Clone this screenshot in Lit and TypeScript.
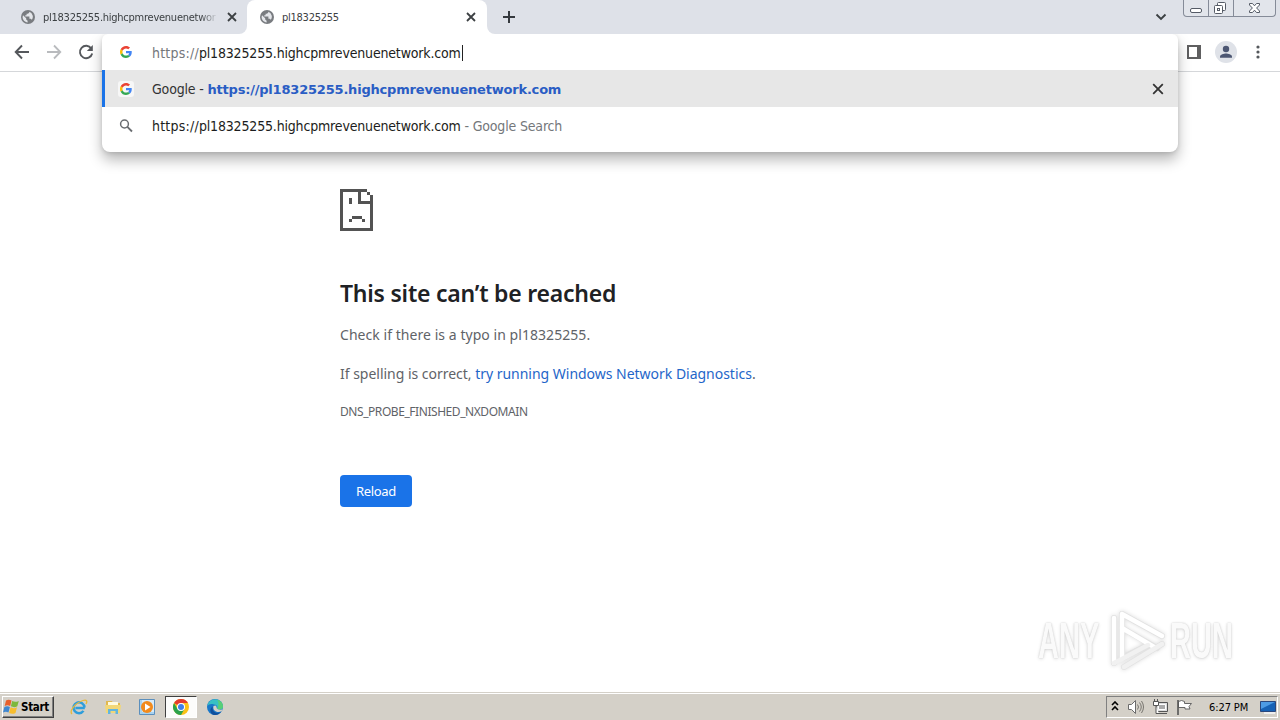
import { LitElement, html, css, svg } from 'lit';
import { customElement } from 'lit/decorators.js';

const globe = html`
  <svg class="globe" width="14" height="14" viewBox="0 0 14 14">
    <circle cx="7" cy="7" r="7" fill="#797c80" />
    <path d="M2 5.2 5.2 8.3v1.3l1.4 1.1v1.7C3.700 12.100 1.600 9.800 1.600 7zM8.300 1.800v.7L7 3.800H5.600v1.500H4.300v1.300h4.100v2.100h1.300l1.200 1.100a5.300 5.300 0 0 0-2.600-8z" fill="#e4e6ea" />
  </svg>`;

const googleG = html`
  <svg width="12" height="12" viewBox="0 0 48 48">
    <path fill="#ea4335" d="M24 9.500c3.540 0 6.710 1.220 9.210 3.600l6.850-6.850C35.900 2.380 30.470 0 24 0 14.620 0 6.510 5.380 2.560 13.220l7.980 6.190C12.430 13.720 17.740 9.500 24 9.500z" />
    <path fill="#4285f4" d="M46.980 24.550c0-1.570-.15-3.090-.38-4.550H24v9.020h12.940c-.58 2.960-2.260 5.480-4.780 7.180l7.730 6c4.510-4.180 7.090-10.360 7.090-17.650z" />
    <path fill="#fbbc05" d="M10.530 28.590c-.48-1.450-.76-2.990-.76-4.590s.27-3.140.76-4.590l-7.980-6.190C.92 16.460 0 20.120 0 24s.92 7.540 2.560 10.780l7.970-6.190z" />
    <path fill="#34a853" d="M24 48c6.480 0 11.930-2.130 15.890-5.810l-7.730-6c-2.150 1.450-4.920 2.300-8.160 2.300-6.260 0-11.570-4.220-13.470-9.910l-7.980 6.190C6.510 42.620 14.620 48 24 48z" />
  </svg>`;

const cross = (size: number, width: number) => html`
  <svg width=${size} height=${size} viewBox="0 0 10 10">
    <path d="M1 1 9 9M9 1 1 9" stroke="currentColor" stroke-width=${width} fill="none" />
  </svg>`;

@customElement('tab-strip')
export class TabStrip extends LitElement {
  static styles = css`
    :host {
      display: flex;
      height: 34px;
      background: #fff;
      color: #3c4043;
      font: 11px 'DejaVu Sans Condensed', 'DejaVu Sans', sans-serif;
    }
    .tab {
      display: flex;
      align-items: center;
      box-sizing: border-box;
      height: 34px;
    }
    .idle {
      width: 247px;
      padding-left: 21px;
      background: #dee1e8;
      border-bottom-right-radius: 8px;
    }
    .corner {
      width: 240px;
      background: linear-gradient(#dee1e8 0 12px, #fff 12px);
    }
    .active {
      width: 240px;
      padding-left: 13px;
      background: #fff;
      border-radius: 8px 8px 0 0;
    }
    .label {
      width: 175px;
      margin-left: 8px;
      padding-top: 1px;
      overflow: hidden;
      white-space: nowrap;
      letter-spacing: -0.25px;
      line-height: 16px;
    }
    .fade {
      -webkit-mask-image: linear-gradient(90deg, #000 90%, transparent);
    }
    .active .label {
      width: 180px;
    }
    .tab > svg:last-child {
      margin-left: 9px;
    }
    .active > svg:last-child {
      margin-left: 4px;
    }
    .rest {
      flex: 1;
      display: flex;
      align-items: center;
      justify-content: space-between;
      background: #dee1e8;
      border-bottom-left-radius: 8px;
      padding-left: 16px;
    }
    .right {
      display: flex;
      align-items: center;
      height: 34px;
    }
    .caption {
      display: flex;
      align-self: flex-start;
      box-sizing: border-box;
      width: 93px;
      height: 17px;
      margin: 0 4px 0 16px;
      border: 1px solid #858b98;
      border-top: 0;
      border-radius: 0 0 4px 4px;
      background: #e2e5eb;
    }
    .caption svg {
      display: block;
    }
    .caption svg + svg {
      border-left: 1px solid #858b98;
    }
  `;

  render() {
    return html`
      <div class="tab idle">
        ${globe}
        <span class="label fade">pl18325255.highcpmrevenuenetwor</span>
        ${cross(10, 1.8)}
      </div>
      <div class="corner">
        <div class="tab active">
          ${globe}
          <span class="label">pl18325255</span>
          ${cross(10, 1.8)}
        </div>
      </div>
      <div class="rest">
        <svg width="12" height="12" viewBox="0 0 12 12">
          <path d="M6 0v12M0 6h12" stroke="#35393e" stroke-width="2" />
        </svg>
        <div class="right">
          <svg width="12" height="8" viewBox="0 0 12 8">
            <path d="m1.500 1.500 4.500 4.500 4.500-4.500" fill="none" stroke="#3c4043" stroke-width="1.900" />
          </svg>
          <div class="caption">
            <svg width="24" height="16" viewBox="0 0 24 16">
              <rect x="6.500" y="8.500" width="11" height="4" rx="1.500" fill="#fff" stroke="#555b66" />
            </svg>
            <svg width="24" height="16" viewBox="0 0 24 16">
              <g fill="#fff" stroke="#555b66">
                <rect x="8.500" y="2.500" width="8" height="8" rx="1" />
                <rect x="5.500" y="5.500" width="8" height="8" rx="1" />
                <rect x="8.500" y="8.500" width="2" height="2" />
              </g>
            </svg>
            <svg width="41" height="16" viewBox="0 0 41 16">
              <path d="M15.500 3.500h3l2 2.300 2-2.300h3v1.500L22.600 8l2.900 3v1.500h-3l-2-2.300-2 2.300h-3V11l2.900-3-2.900-3z" fill="#fff" stroke="#555b66" />
            </svg>
          </div>
        </div>
      </div>
    `;
  }
}

@customElement('tool-bar')
export class ToolBar extends LitElement {
  static styles = css`
    :host {
      display: flex;
      align-items: center;
      justify-content: space-between;
      box-sizing: border-box;
      height: 38px;
      padding: 0 12px 2px 14px;
      border-bottom: 1px solid #d5d7da;
      background: #fff;
    }
    .group {
      display: flex;
      align-items: center;
      gap: 16px;
    }
    .group.end {
      gap: 14px;
    }
    .group.end svg:last-child {
      margin-left: -3px;
    }
    svg {
      display: block;
    }
  `;

  render() {
    return html`
      <div class="group">
        <svg width="16" height="16" viewBox="0 0 16 16">
          <path d="M15 8H2M8 1.500 1.700 8 8 14.500" fill="none" stroke="#55585c" stroke-width="1.900" />
        </svg>
        <svg width="16" height="16" viewBox="0 0 16 16">
          <path d="M1 8h13M8 1.500 14.300 8 8 14.500" fill="none" stroke="#b9bbbe" stroke-width="1.800" />
        </svg>
        <svg width="16" height="16" viewBox="0 0 16 16">
          <path d="M13.300 4.500A6.200 6.200 0 1 0 14.200 9.500" fill="none" stroke="#55585c" stroke-width="1.900" />
          <path d="M14.800 1v6H8.800z" fill="#55585c" />
        </svg>
      </div>
      <div class="group end">
        <svg width="14" height="14" viewBox="0 0 14 14">
          <path d="M0 0h14v14H0zM2 2v10h8V2z" fill="#5f5f60" fill-rule="evenodd" />
        </svg>
        <svg width="22" height="22" viewBox="0 0 22 22">
          <circle cx="11" cy="11" r="11" fill="#dfe2e8" />
          <circle cx="11" cy="8" r="3.200" fill="#4c5672" />
          <path d="M5 16.800v-1.300c0-2 4-3 6-3s6 1 6 3v1.300z" fill="#4c5672" />
        </svg>
        <svg width="20" height="16" viewBox="0 0 20 16">
          <g fill="#55585c">
            <circle cx="10" cy="3" r="1.600" /><circle cx="10" cy="8" r="1.600" /><circle cx="10" cy="13" r="1.600" />
          </g>
        </svg>
      </div>
    `;
  }
}

@customElement('omni-box')
export class OmniBox extends LitElement {
  static styles = css`
    :host {
      display: block;
      height: 118px;
      overflow: hidden;
      border-radius: 6px 6px 8px 8px;
      background: #fff;
      color: #1c1d20;
      font: 14px 'DejaVu Sans Condensed', 'DejaVu Sans', sans-serif;
    }
    .row {
      display: flex;
      align-items: center;
      box-sizing: border-box;
      height: 37px;
      padding: 0 14px 0 17px;
      white-space: pre;
    }
    .input {
      height: 36px;
    }
    .input .text {
      padding-top: 1px;
    }
    .row > svg:first-child {
      flex: none;
      width: 14px;
      margin-right: 19px;
    }
    .selected {
      background: #e7e7e7;
      border-left: 3px solid #1a73e8;
      padding-left: 14px;
      color: #333;
    }
    .badge {
      display: flex;
      padding: 2px;
      margin: 0 18px 0 -1px;
      border-radius: 3px;
      background: #f7f7f7;
    }
    .row .plain {
      background: none;
    }
    .text {
      flex: 1;
      letter-spacing: -0.17px;
    }
    .scheme {
      letter-spacing: 0.22px;
    }
    .dim {
      color: #74777b;
    }
    .caret {
      display: inline-block;
      width: 1px;
      height: 16px;
      margin-left: 1px;
      background: #222;
      vertical-align: -3px;
    }
    b {
      color: #2a5dc4;
      font-family: 'DejaVu Sans', sans-serif;
      font-size: 13px;
      letter-spacing: -0.2px;
    }
  `;

  render() {
    return html`
      <div class="row input">
        <span class="badge plain">${googleG}</span>
        <span class="text"><span class="scheme dim">https://</span>pl18325255.highcpmrevenuenetwork.com<i class="caret"></i></span>
      </div>
      <div class="row selected">
        <span class="badge">${googleG}</span>
        <span class="text">Google - <b>https://pl18325255.highcpmrevenuenetwork.com</b></span>
        ${cross(12, 1.5)}
      </div>
      <div class="row">
        <svg width="14" height="14" viewBox="0 0 14 14">
          <circle cx="5.500" cy="5" r="3.900" fill="none" stroke="#6a6d71" stroke-width="1.500" />
          <path d="m8.400 7.900 4.600 4.600" stroke="#6a6d71" stroke-width="1.800" />
        </svg>
        <span class="text"><span class="scheme">https://</span>pl18325255.highcpmrevenuenetwork.com<span class="dim"> - Google Search</span></span>
      </div>
    `;
  }
}

@customElement('error-page')
export class ErrorPage extends LitElement {
  static styles = css`
    :host {
      display: block;
      flex: 1;
      padding: 117px 0 0 340px;
      color: #5f6368;
      font: 14px/20px 'Noto Sans', sans-serif;
    }
    .sad {
      display: block;
    }
    h1 {
      margin: 46px 0 0;
      color: #202124;
      font-size: 23px;
      font-weight: 600;
      line-height: 32px;
      letter-spacing: -0.22px;
    }
    p {
      margin: 16px 0 0;
    }
    p + p {
      margin-top: 19px;
    }
    .typo {
      letter-spacing: 0.05px;
    }
    .hint {
      letter-spacing: -0.02px;
    }
    a {
      color: #1f66c9;
    }
    .code {
      margin-top: 18px;
      font-size: 12px;
      letter-spacing: -0.44px;
    }
    button {
      display: block;
      width: 72px;
      height: 32px;
      margin-top: 53px;
      padding: 0;
      border: 0;
      border-radius: 4px;
      background: #1a73e8;
      color: #fff;
      font: 13px 'Noto Sans', sans-serif;
      letter-spacing: -0.3px;
    }
  `;

  render() {
    return html`
      <svg class="sad" width="33" height="42" viewBox="0 0 33 42" shape-rendering="crispEdges" fill="#535353">
        <path d="M0 0h27v3h-6v9h12v3H18V3H3v36h27V6h3v36H0z" />
        <path d="M27 3h3v3h-3zM9 9h3v6H9zM12 27h10v3H12zM9 30h3v3H9zM22 30h3v3h-3z" />
      </svg>
      <h1>This site can’t be reached</h1>
      <p class="typo">Check if there is a typo in pl18325255.</p>
      <p class="hint">If spelling is correct, <a>try running Windows Network Diagnostics</a>.</p>
      <div class="code">DNS_PROBE_FINISHED_NXDOMAIN</div>
      <button>Reload</button>
    `;
  }
}

@customElement('task-bar')
export class TaskBar extends LitElement {
  static styles = css`
    :host {
      display: flex;
      align-items: center;
      box-sizing: border-box;
      height: 28px;
      padding: 1px 2px 0;
      border-top: 1px solid #d4d0c8;
      background: #d4d0c8;
      box-shadow: inset 0 1px #fff;
      color: #000;
      font: 11px 'DejaVu Sans Condensed', 'DejaVu Sans', sans-serif;
    }
    svg {
      display: block;
    }
    .start {
      display: flex;
      align-items: center;
      gap: 1px;
      box-sizing: border-box;
      width: 52px;
      height: 22px;
      padding-left: 0;
      border: 1px solid;
      border-color: #fff #404040 #404040 #fff;
      box-shadow: inset -1px -1px #808080;
      font-size: 11.5px;
      font-weight: bold;
      letter-spacing: -0.3px;
    }
    .apps {
      display: flex;
      flex: 1;
      padding-left: 9px;
      gap: 2px;
    }
    .app {
      display: flex;
      align-items: center;
      justify-content: center;
      box-sizing: border-box;
      width: 32px;
      height: 22px;
    }
    .pressed {
      border: 1px solid;
      border-color: #404040 #fff #fff #404040;
      background: #fcfcfb;
    }
    .tray {
      display: flex;
      align-items: center;
      box-sizing: border-box;
      width: 172px;
      height: 22px;
      padding: 0 1px 0 4px;
      border: 1px solid;
      border-color: #808080 #fff #fff #808080;
      gap: 8px;
    }
    .clock {
      flex: 1;
      padding-left: 9px;
      letter-spacing: -0.1px;
      white-space: nowrap;
    }
  `;

  render() {
    return html`
      <div class="start">
        <svg width="17" height="16" viewBox="0 0 17 16">
          <path d="M3 1.500c2-1.300 3.700-1 5.500 0L7.200 6.900c-1.800-1-3.700-1-5.500 0z" fill="#e8602c" />
          <path d="M9.200 2c1.900 1 3.900 1.200 6.600 0l-1.500 5.300c-2.200 1.200-4.400 1-6.400 0z" fill="#7db83c" />
          <path d="M1.400 7.900c1.900-1 3.700-1 5.500 0L5.500 13.500c-1.800-1-3.700-1-5.500 0z" fill="#3f87d0" />
          <path d="M7.600 8.300c1.900 1 4 1.200 6.400 0l-1.500 5.600c-2.200 1.200-4.400 1-6.400 0z" fill="#f7bd2e" />
        </svg>
        <span>Start</span>
      </div>
      <div class="apps">
        <div class="app">
          <svg width="18" height="18" viewBox="0 0 18 18">
            <path d="M14.800 10H5.400M14.500 9.500a5.500 5.500 0 1 0-1 3.400" fill="none" stroke="#2f9edb" stroke-width="2.500" />
            <path d="M2 16C-1 13 5 5 13 2.500c4-1.200 4.500.8 3 3.500" fill="none" stroke="#e8b93a" stroke-width="1.300" />
          </svg>
        </div>
        <div class="app">
          <svg width="18" height="18" viewBox="0 0 18 18">
            <path d="M2 3h6l1 2h7v10H2z" fill="#e0b850" />
            <path d="M4 4h10v5H4z" fill="#fffbe0" />
            <path d="M1 7h16l-1 8H2z" fill="#f2d778" />
            <path d="M4 16v-5h10v5h-2.500v-3h-5v3z" fill="#62b5df" />
          </svg>
        </div>
        <div class="app">
          <svg width="18" height="18" viewBox="0 0 18 18">
            <path d="M1.500 1.500h15v15h-15z" fill="#a8d2ef" stroke="#5b8fbd" />
            <rect x="4" y="2" width="12" height="12" fill="#d8ebf8" />
            <circle cx="9" cy="9" r="6" fill="#f28a1c" />
            <path d="m7 5.500 5.500 3.500L7 12.500z" fill="#fff" />
          </svg>
        </div>
        <div class="app pressed">
          <svg width="16" height="16" viewBox="0 0 16 16">
            <circle cx="8" cy="8" r="8" fill="#fbc116" />
            <path d="M8 8 1.070 4A8 8 0 0 1 14.930 4H8z" fill="#e33b2e" />
            <path d="M1.070 4A8 8 0 0 0 8 16l3.500-6L8 8 4.500 10z" fill="#2ba24c" />
            <circle cx="8" cy="8" r="4" fill="#fff" />
            <circle cx="8" cy="8" r="3" fill="#3f7fe8" />
          </svg>
        </div>
        <div class="app">
          <svg width="16" height="16" viewBox="0 0 16 16">
            <circle cx="8" cy="8" r="8" fill="#1877c9" />
            <path d="M.3 7A7.900 7.900 0 0 1 16 7.500c0 3-3.600 3.700-6 2.200 1-1.700 0-4.200-3-4.200C4 4.500 1.500 5.500.3 7z" fill="#38c0c4" />
            <path d="M10 1c4 .6 6 3.500 6 6.500 0 3-3.600 3.700-6 2.200C12 7 12 3 10 1z" fill="#58cf77" />
            <path d="M6.500 7c-1 3.500 1.500 6 5 6 1.300 0 2.300-.4 3.200-.8L16 8.500c-.5 3-3.800 2.800-6 1.200C9.500 9 10 7.500 8.500 6.500z" fill="#d4d0c8" />
            <path d="M5.800 7.500c-1.300 4 1.700 7 5.700 6.300 1.200-.2 2.300-.8 3-1.500A8 8 0 0 1 6 15.700C2 13 3 9 5.800 7.500z" fill="#104f9c" />
          </svg>
        </div>
      </div>
      <div class="tray">
        <svg width="8" height="12" viewBox="0 0 8 12">
          <path d="m1 4 3-3 3 3M1 9l3-3 3 3" fill="none" stroke="#000" stroke-width="1.600" />
        </svg>
        <svg width="17" height="16" viewBox="0 0 17 16">
          <path d="M1.500 5.500h3l4-4v13l-4-4h-3z" fill="#fff" stroke="#6b6b6b" />
          <path d="M10.500 5.500q2 2.500 0 5M12.500 3.500q3.500 4.500 0 9M14.500 2q4 6 0 12" fill="none" stroke="#77756f" />
        </svg>
        <svg width="16" height="16" viewBox="0 0 16 16">
          <path d="M4.500 3.500h11v9h-11zM7 14.500h8" fill="#ddd" stroke="#555" />
          <path d="M6.500 5.500h7v5h-7z" fill="#aaa" stroke="#fff" />
          <path d="M1.500 2.500h5v4h-5zM2.500 0v2.500M5.500 0v2.500M4 6.500v8h3" fill="#fff" stroke="#555" />
        </svg>
        <svg width="16" height="16" viewBox="0 0 16 16">
          <path d="M2.500 2.500q3-2 6 0v2h7l-2.500 3 1 2.500h-5v-1.500h-6.500z" fill="#fff" stroke="#666" />
          <path d="M2 1v15" stroke="#555" stroke-width="1.600" />
        </svg>
        <span class="clock">6:27 PM</span>
        <svg width="16" height="16" viewBox="0 0 16 16">
          <path d="M.5 2.500h15v10H.5z" fill="#1762b5" stroke="#2b477c" />
          <path d="M1 3h14L1 10z" fill="#4d9be4" />
          <path d="M4 14h11" stroke="#eee" stroke-width="2" />
        </svg>
      </div>
    `;
  }
}

const playMark = svg`
  <g fill="none" stroke-linecap="round" stroke-linejoin="round">
    <path d="M12 54V9M20 5v44M20 5l40 22M20 19l35 20M20 49l24-12M22 58l38-23" stroke="#e2e2e2" stroke-width="6" />
    <path d="M12 54V9M20 5v44M20 5l40 22M20 19l32 19" stroke="#fff" stroke-width="4.500" />
    <path d="M12 54l8-4 26-14M22 58l38-23" stroke="#f1f1f1" stroke-width="4.500" />
  </g>`;

@customElement('app-root')
export class AppRoot extends LitElement {
  static styles = css`
    :host {
      display: flex;
      flex-direction: column;
      position: relative;
      width: 1280px;
      height: 720px;
      overflow: hidden;
      background: #fff;
    }
    omni-box {
      position: absolute;
      left: 102px;
      top: 34px;
      width: 1076px;
      box-shadow: 0 8px 14px rgba(0, 0, 0, 0.28), 0 1px 4px rgba(0, 0, 0, 0.12);
      clip-path: inset(0 -24px -30px);
    }
    .watermark {
      display: flex;
      align-items: center;
      position: absolute;
      left: 1038px;
      top: 609px;
      height: 64px;
      color: #fafafa;
      font: bold 50px 'Liberation Sans', sans-serif;
      text-shadow: 0 0 2px #c4c4c4, 0 1px 5px #ddd;
    }
    .watermark svg {
      display: block;
      filter: drop-shadow(0 0 2px #ddd);
    }
    .word {
      display: block;
      width: 64px;
    }
    .word span {
      display: inline-block;
      transform: scaleX(0.58);
      transform-origin: 0 50%;
    }
  `;

  render() {
    return html`
      <tab-strip></tab-strip>
      <tool-bar></tool-bar>
      <error-page></error-page>
      <task-bar></task-bar>
      <omni-box></omni-box>
      <div class="watermark">
        <div class="word"><span>ANY</span></div>
        <svg width="68" height="64" viewBox="0 0 68 64">${playMark}</svg>
        <div class="word"><span>RUN</span></div>
      </div>
    `;
  }
}
